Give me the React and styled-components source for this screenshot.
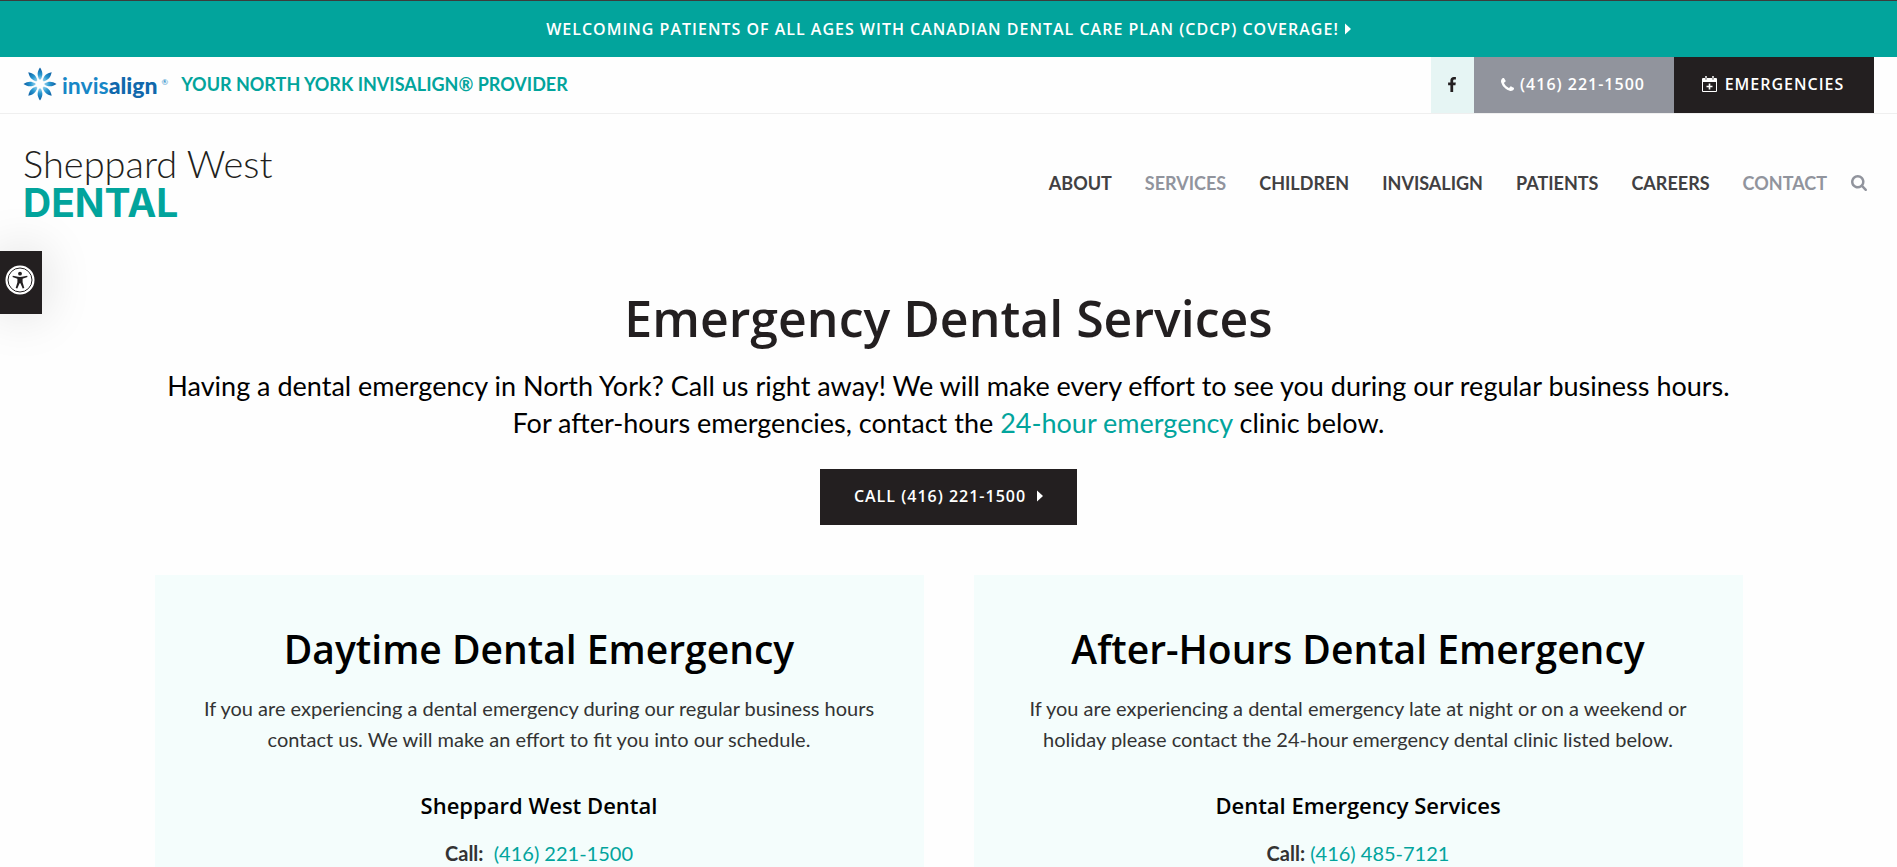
import React from 'react';
import styled, { createGlobalStyle } from 'styled-components';

const GlobalStyle = createGlobalStyle`
  * {
    box-sizing: border-box;
  }

  body {
    margin: 0;
    background: #fefefe;
    color: #333;
    font-family: Lato, sans-serif;
    font-size: 20px;
    line-height: 31px;
  }

  a {
    color: #02a49c;
    text-decoration: none;
  }

  svg {
    display: block;
    flex: none;
  }
`;

const headingFont = '"Open Sans", sans-serif';

const Banner = styled.a`
  display: flex;
  align-items: center;
  justify-content: center;
  gap: 6px;
  height: 57px;
  border-top: 1px solid #3c3c3c;
  background: #02a49c;
  color: white;
  font: 600 16px/24px ${headingFont};
  letter-spacing: 1px;
  text-transform: uppercase;
`;

const TopBar = styled.div`
  display: flex;
  justify-content: space-between;
  padding: 0 23px;
  border-bottom: 1px solid #efefef;
`;

const Provider = styled.a`
  display: flex;
  align-items: center;
  gap: 5px;
  padding-bottom: 2px;
  font-size: 18px;
  font-weight: bold;
`;

const InvisalignName = styled.span`
  margin-right: 8px;
  color: #1787c7;
  font-size: 23px;

  b {
    color: #1068ac;
  }

  sup {
    margin-left: 4px;
    font-size: 8px;
    font-weight: normal;
  }
`;

const TopLinks = styled.div`
  display: flex;
`;

const TopLink = styled.a`
  display: flex;
  align-items: center;
  justify-content: center;
  gap: ${(props) => props.$gap || 0}px;
  width: ${(props) => props.$width}px;
  height: 56px;
  padding: 0 2px 2px 0;
  background: ${(props) => props.$bg};
  color: ${(props) => props.$color || 'white'};
  font: 600 16px/24px ${headingFont};
  letter-spacing: 1px;
`;

const Header = styled.header`
  display: flex;
  align-items: center;
  justify-content: space-between;
  padding: 30px 30px 28px 23px;
`;

const Logo = styled.a`
  display: flex;
  flex-direction: column;
  gap: 2px;
  color: #231f20;
  font: 300 38px/38px Lato, sans-serif;

  strong {
    color: #02a49c;
    font: 700 39px/38px Inter, sans-serif;
  }
`;

const Nav = styled.nav`
  display: flex;
  align-items: center;
  gap: 33px;
`;

const NavLink = styled.a`
  color: ${(props) => (props.$active ? '#91949d' : '#414042')};
  font-size: 18px;
  font-weight: bold;
  text-transform: uppercase;
`;

const SearchGroup = styled.div`
  display: flex;
  align-items: center;
  gap: 24px;
`;

const IconButton = styled.button`
  padding: 0;
  border: 0;
  background: none;
  color: #91949d;
  cursor: pointer;
`;

const AccessButton = styled.button`
  position: fixed;
  top: 251px;
  left: 0;
  display: flex;
  justify-content: center;
  width: 42px;
  height: 63px;
  padding: 14px 2px 0 0;
  border: 0;
  background: #231f20;
  box-shadow: 0 0 50px rgba(0, 0, 0, 0.15);
  cursor: pointer;
`;

const Main = styled.main`
  max-width: 1588px;
  margin: 0 auto;
  padding-top: 38px;
  text-align: center;
`;

const Title = styled.h1`
  margin: 0 0 19px;
  color: #231f20;
  font: 600 50px/60px ${headingFont};
`;

const Lead = styled.p`
  margin: 0 0 28px;
  color: black;
  font-size: 27px;
  line-height: 37px;
`;

const CallButton = styled.a`
  display: inline-flex;
  align-items: center;
  gap: 11px;
  height: 56px;
  padding: 0 34px 2px;
  background: #231f20;
  color: white;
  font: 600 16px/24px ${headingFont};
  letter-spacing: 1px;
  text-transform: uppercase;
  vertical-align: top;
`;

const Cards = styled.div`
  display: grid;
  grid-template-columns: 1fr 1fr;
  gap: 50px;
  margin-top: 50px;
`;

const Card = styled.section`
  padding: 50px 40px;
  background: #f4fdfc;
`;

const CardTitle = styled.h2`
  margin: 0 0 20px;
  color: black;
  font: 600 39px/48px ${headingFont};
`;

const CardText = styled.p`
  margin: 0 0 36px;
`;

const ClinicName = styled.h3`
  margin: 0 0 19px;
  color: black;
  font: 600 22px/28px ${headingFont};
`;

const ClinicCall = styled.p`
  margin: 0;
`;

const Caret = () => (
  <svg width="6" height="12" viewBox="0 0 6 12" fill="currentColor">
    <path d="M0 0.5L6 6L0 11.5z" />
  </svg>
);

const PhoneIcon = () => (
  <svg width="13" height="13" viewBox="0 128 1408 1408" fill="currentColor">
    <path d="M1408 1240q0 27-10 70.5t-21 68.5q-21 50-122 106-94 51-186 51-27 0-53-3.5t-57-12.5-47-14.5-55.5-20.5-49.5-18q-98-35-175-83-127-79-264-216t-216-264q-48-77-83-175-3-9-18-49.5t-20.5-55.5-14.5-47-12.5-57-3.5-53q0-92 51-186 56-101 106-122 25-11 68.5-21t70.5-10q14 0 21 3 18 6 53 76 11 19 30 54t35 63.5 31 53.5q3 4 17.5 25t21.5 35.5 7 28.5q0 20-28.5 50t-62 55-62 53-28.5 46q0 9 5 22.5t8.5 20.5 14 24 11.5 19q76 137 174 235t235 174q2 1 19 11.5t24 14 20.5 8.5 22.5 5q18 0 46-28.5t53-62 55-62 50-28.5q14 0 28.5 7t35.5 21.5 25 17.5q25 15 53.5 31t63.5 35 54 30q70 35 76 53 3 7 3 21z" />
  </svg>
);

const FacebookIcon = () => (
  <svg width="8" height="15" viewBox="479 0 864 1664" fill="currentColor">
    <path d="M1343 12v264h-157q-86 0-116 36t-30 108v189h293l-39 296h-254v759h-306v-759h-255v-296h255v-218q0-186 104-288.5t277-102.5q147 0 228 12z" />
  </svg>
);

const SearchIcon = () => (
  <svg width="16" height="16" viewBox="64 128 1664 1664" fill="currentColor">
    <path d="M1216 832q0-185-131.5-316.5t-316.5-131.5-316.5 131.5-131.5 316.5 131.5 316.5 316.5 131.5 316.5-131.5 131.5-316.5zm512 832q0 52-38 90t-90 38q-54 0-90-38l-343-342q-179 124-399 124-143 0-273.5-55.5t-225-150-150-225-55.5-273.5 55.5-273.5 150-225 225-150 273.5-55.5 273.5 55.5 225 150 150 225 55.5 273.5q0 220-124 399l343 343q37 37 37 90z" />
  </svg>
);

const CalendarIcon = () => (
  <svg width="15" height="16" viewBox="0 0 15 16" fill="currentColor">
    <path
      fillRule="evenodd"
      d="M1 2h2V1q0-1 1-1t1 1v1h5V1q0-1 1-1t1 1v1h2q1 0 1 1v12q0 1-1 1H1q-1 0-1-1V3q0-1 1-1zM1 6v9h13V6zM3.6 1.3v2.4h.8V1.3zM10.6 1.3v2.4h.8V1.3z"
    />
    <path d="M6.7 7.5h1.6v2.2h2.2v1.6H8.3v2.2H6.7v-2.2H4.5V9.7h2.2z" />
  </svg>
);

// eight petals turned around the centre
const InvisalignMark = () => (
  <svg width="34" height="34" viewBox="-17 -17 34 34">
    <defs>
      <radialGradient id="petal" gradientUnits="userSpaceOnUse" cx="0" cy="0" r="16">
        <stop offset="0.2" stopColor="#a9dcf2" />
        <stop offset="0.6" stopColor="#2797d0" />
        <stop offset="1" stopColor="#0d5fa3" />
      </radialGradient>
    </defs>
    {[0, 45, 90, 135, 180, 225, 270, 315].map((angle) => (
      <path
        key={angle}
        d="M0 -16.5C3 -12 3 -9 0.8 -4.5H-0.8C-3 -9 -3 -12 0 -16.5z"
        fill="url(#petal)"
        transform={`rotate(${angle})`}
      />
    ))}
  </svg>
);

const AccessIcon = () => (
  <svg width="30" height="30" viewBox="0 0 30 30">
    <circle cx="15" cy="15" r="14.5" fill="white" />
    <circle cx="15" cy="15" r="12" fill="none" stroke="#231f20" />
    <g fill="#231f20">
      <circle cx="15" cy="8.7" r="1.9" />
      <path d="M7.8 10.8l5.2 1q2 .3 4 0l5.2-1 .3 1.3-4.9 1.6v3.6l1.7 5.8-1.6.5-2.3-5.4h-.8l-2.3 5.4-1.6-.5 1.7-5.8v-3.6l-4.9-1.6z" />
    </g>
  </svg>
);

const menu = [
  { name: 'About' },
  { name: 'Services', active: true },
  { name: 'Children' },
  { name: 'Invisalign' },
  { name: 'Patients' },
  { name: 'Careers' },
];

const App = () => {
  return (
    <>
      <GlobalStyle />
      <Banner href="#cdcp">
        Welcoming patients of all ages with Canadian Dental Care Plan (CDCP) coverage!
        <Caret />
      </Banner>

      <TopBar>
        <Provider href="#invisalign">
          <InvisalignMark />
          <InvisalignName>
            invis<b>align</b>
            <sup>®</sup>
          </InvisalignName>
          YOUR NORTH YORK INVISALIGN® PROVIDER
        </Provider>
        <TopLinks>
          <TopLink href="#facebook" aria-label="Facebook" $width={43} $bg="#e6f5f4" $color="#231f20">
            <FacebookIcon />
          </TopLink>
          <TopLink href="tel:4162211500" $width={200} $gap={6} $bg="#91949d">
            <PhoneIcon />
            (416) 221-1500
          </TopLink>
          <TopLink href="#emergencies" $width={200} $gap={8} $bg="#231f20">
            <CalendarIcon />
            EMERGENCIES
          </TopLink>
        </TopLinks>
      </TopBar>

      <Header>
        <Logo href="#home">
          Sheppard West
          <strong>DENTAL</strong>
        </Logo>
        <Nav>
          {menu.map((item) => (
            <NavLink key={item.name} href={`#${item.name}`} $active={item.active}>
              {item.name}
            </NavLink>
          ))}
          <SearchGroup>
            <NavLink href="#Contact" $active>
              Contact
            </NavLink>
            <IconButton type="button" aria-label="Search">
              <SearchIcon />
            </IconButton>
          </SearchGroup>
        </Nav>
      </Header>

      <AccessButton type="button" aria-label="Accessibility">
        <AccessIcon />
      </AccessButton>

      <Main>
        <Title>Emergency Dental Services</Title>
        <Lead>
          Having a dental emergency in North York? Call us right away! We will make every effort to
          see you during our regular business hours.
          <br />
          For after-hours emergencies, contact the <a href="#after-hours">24-hour emergency</a> clinic
          below.
        </Lead>
        <CallButton href="tel:4162211500">
          Call (416) 221-1500
          <Caret />
        </CallButton>

        <Cards>
          <Card>
            <CardTitle>Daytime Dental Emergency</CardTitle>
            <CardText>
              If you are experiencing a dental emergency during our regular business hours contact
              us. We will make an effort to fit you into our schedule.
            </CardText>
            <ClinicName>Sheppard West Dental</ClinicName>
            <ClinicCall>
              <b>Call:</b>&nbsp; <a href="tel:4162211500">(416) 221-1500</a>
            </ClinicCall>
          </Card>
          <Card id="after-hours">
            <CardTitle>After-Hours Dental Emergency</CardTitle>
            <CardText>
              If you are experiencing a dental emergency late at night or on a weekend or holiday
              please contact the 24-hour emergency dental clinic listed below.
            </CardText>
            <ClinicName>Dental Emergency Services</ClinicName>
            <ClinicCall>
              <b>Call:</b> <a href="tel:4164857121">(416) 485-7121</a>
            </ClinicCall>
          </Card>
        </Cards>
      </Main>
    </>
  );
};

export default App;
